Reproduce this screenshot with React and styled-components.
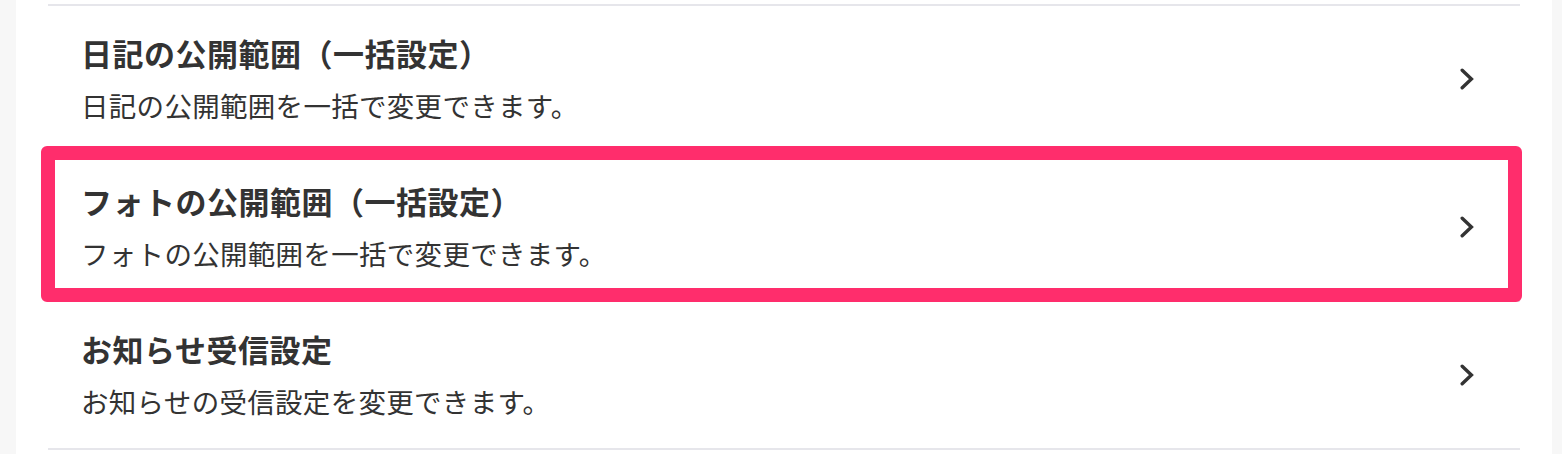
import React from "react";
import styled, { createGlobalStyle } from "styled-components";

const GlobalStyle = createGlobalStyle`
  html, body {
    margin: 0;
    padding: 0;
    background: #f7f7f7;
  }
  body {
    font-family: "Noto Sans CJK JP", "Noto Sans", sans-serif;
    color: #333;
  }
`;

const items = [
  {
    title: "日記の公開範囲（一括設定）",
    desc: "日記の公開範囲を一括で変更できます。",
  },
  {
    title: "フォトの公開範囲（一括設定）",
    desc: "フォトの公開範囲を一括で変更できます。",
    marked: true,
  },
  {
    title: "お知らせ受信設定",
    desc: "お知らせの受信設定を変更できます。",
  },
];

function Chevron() {
  return (
    <Arrow width="14" height="22" viewBox="0 0 14 22" aria-hidden="true">
      <polyline
        points="2.2 2.2 11.4 11 2.2 19.8"
        fill="none"
        stroke="#333"
        strokeWidth="3.4"
        strokeLinecap="round"
        strokeLinejoin="miter"
      />
    </Arrow>
  );
}

export default function App() {
  return (
    <>
      <GlobalStyle />
      <Panel>
        <List>
          {items.map((item) => (
            <Row key={item.title} $marked={item.marked}>
              <Texts>
                <Title>{item.title}</Title>
                <Desc>{item.desc}</Desc>
              </Texts>
              <Chevron />
            </Row>
          ))}
        </List>
      </Panel>
    </>
  );
}

const Panel = styled.div`
  background: #fff;
  margin: 0 10px 0 16px;
  min-height: 454px;
  padding: 4px 32px 0;
  box-sizing: border-box;
`;

const List = styled.ul`
  list-style: none;
  margin: 0;
  padding: 0;
  border-top: 2px solid #e6e6eb;
`;

const Row = styled.li`
  position: relative;
  height: 146px;
  border-bottom: 2px solid #e6e6eb;
  display: flex;
  align-items: center;
  justify-content: space-between;
  padding: 0 46px 0 33px;
  cursor: pointer;

  &::after {
    content: "";
    display: ${(p) => (p.$marked ? "block" : "none")};
    position: absolute;
    left: -7px;
    right: -2px;
    top: -8px;
    bottom: -2px;
    border: 14px solid #ff2d6c;
    border-radius: 6px;
    pointer-events: none;
  }
`;

const Texts = styled.div`
  display: flex;
  flex-direction: column;
  gap: 12px;
`;

const Title = styled.div`
  font-size: 31px;
  font-weight: 700;
  letter-spacing: 0.5px;
  line-height: 40px;
  color: #333;
`;

const Desc = styled.div`
  font-size: 27.5px;
  font-weight: 400;
  letter-spacing: 0.3px;
  line-height: 40px;
  color: #333;
`;

const Arrow = styled.svg`
  display: block;
  flex-shrink: 0;
`;
